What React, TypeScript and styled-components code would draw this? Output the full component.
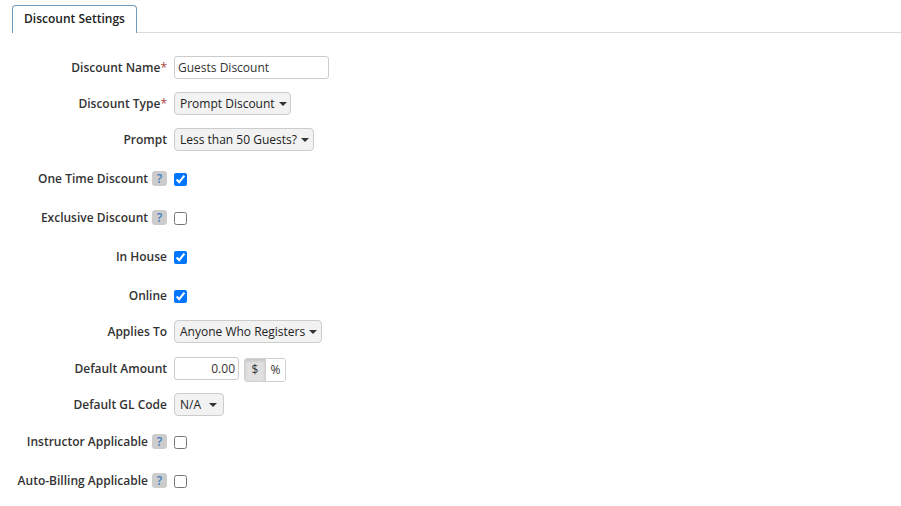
import React from "react";
import styled, { createGlobalStyle } from "styled-components";

const Global = createGlobalStyle`
  body { margin: 0; background: #fff; font-family: "Open Sans", "Noto Sans", sans-serif; color: #333; }
  * { box-sizing: border-box; }
`;

const Page = styled.div`
  width: 901px;
  padding-top: 5px;
`;

const TabBar = styled.div`
  display: flex;
  align-items: flex-end;
  height: 28px;
`;

const TabSpacer = styled.div`
  width: 12px;
`;

const Tab = styled.div`
  width: 125px;
  height: 28px;
  border: 1px solid #6f9cc2;
  border-bottom: none;
  border-radius: 4px 4px 0 0;
  display: flex;
  align-items: center;
  justify-content: center;
  padding-bottom: 2px;
  font-size: 12px;
  font-weight: 600;
  color: #222;
  background: #fff;
`;

const TabLine = styled.div`
  flex: 1;
  border-bottom: 1px solid #dcdcdc;
  height: 28px;
`;

const Form = styled.div`
  display: flex;
  flex-direction: column;
  padding-top: 10px;
`;

const Row = styled.div<{ $gap: number }>`
  display: flex;
  align-items: center;
  height: 23px;
  margin-top: ${(p) => p.$gap}px;
`;

const LabelCell = styled.div`
  width: 167px;
  display: flex;
  justify-content: flex-end;
  align-items: center;
  gap: 4px;
`;

const Label = styled.span`
  font-size: 12px;
  font-weight: 600;
  color: #333;
  white-space: nowrap;
`;

const Req = styled.span`
  color: #a94442;
  font-weight: 400;
`;

const Help = styled.span`
  display: inline-flex;
  align-items: center;
  justify-content: center;
  width: 15px;
  height: 15px;
  border-radius: 3px;
  background: #cccccc;
  color: #3f7fc0;
  font-size: 12px;
  font-weight: 600;
  line-height: 1;
`;

const Control = styled.div`
  margin-left: 7px;
  display: flex;
  align-items: center;
  gap: 5px;
`;

const TextInput = styled.div<{ $w: number; $right?: boolean }>`
  width: ${(p) => p.$w}px;
  height: 23px;
  border: 1px solid #ccc;
  border-radius: 3px;
  background: #fff;
  font-size: 12px;
  color: #333;
  white-space: nowrap;
  display: flex;
  align-items: center;
  justify-content: ${(p) => (p.$right ? "flex-end" : "flex-start")};
  padding: 0 3px 1px 3px;
`;

const Select = styled.div<{ $w: number }>`
  width: ${(p) => p.$w}px;
  height: 23px;
  border: 1px solid #ccc;
  border-radius: 4px;
  background: #f2f2f2;
  font-size: 12px;
  color: #222;
  white-space: nowrap;
  display: flex;
  align-items: center;
  justify-content: space-between;
  gap: 4px;
  padding: 0 6px 1px 5px;
`;

const Caret = styled.span`
  flex: none;
  width: 0;
  height: 0;
  border-left: 4px solid transparent;
  border-right: 4px solid transparent;
  border-top: 4px solid #333;
  margin-top: 1px;
`;

const Check = styled.input.attrs({ type: "checkbox" })`
  width: 13px;
  height: 13px;
  margin: 2px 0 0 0;
`;

const BtnGroup = styled.div`
  display: flex;
  height: 24px;
  margin-top: 2px;
  border: 1px solid #d0d0d0;
  border-radius: 3px;
  overflow: hidden;
`;

const ToggleBtn = styled.div<{ $active?: boolean }>`
  width: 20px;
  display: flex;
  align-items: center;
  justify-content: center;
  font-size: 12px;
  color: #333;
  background: ${(p) => (p.$active ? "#e0e0e0" : "#fff")};
  box-shadow: ${(p) => (p.$active ? "inset 0 2px 3px rgba(0,0,0,0.12)" : "none")};
  & + & {
    border-left: 1px solid #d0d0d0;
  }
`;

type FieldProps = { label: string; req?: boolean; help?: boolean; gap: number; children: React.ReactNode };

const Field = ({ label, req, help, gap, children }: FieldProps) => (
  <Row $gap={gap}>
    <LabelCell>
      <Label>
        {label}
        {req && <Req>*</Req>}
      </Label>
      {help && <Help>?</Help>}
    </LabelCell>
    <Control>{children}</Control>
  </Row>
);

export default function App() {
  return (
    <Page>
      <Global />
      <TabBar>
        <TabSpacer />
        <Tab>Discount Settings</Tab>
        <TabLine />
      </TabBar>
      <Form>
        <Field label="Discount Name" req gap={13}>
          <TextInput $w={155}>Guests Discount</TextInput>
        </Field>
        <Field label="Discount Type" req gap={13}>
          <Select $w={117}>
            Prompt Discount <Caret />
          </Select>
        </Field>
        <Field label="Prompt" gap={13}>
          <Select $w={140}>
            Less than 50 Guests? <Caret />
          </Select>
        </Field>
        <Field label="One Time Discount" help gap={16}>
          <Check defaultChecked />
        </Field>
        <Field label="Exclusive Discount" help gap={16}>
          <Check />
        </Field>
        <Field label="In House" gap={16}>
          <Check defaultChecked />
        </Field>
        <Field label="Online" gap={16}>
          <Check defaultChecked />
        </Field>
        <Field label="Applies To" gap={13}>
          <Select $w={148}>
            Anyone Who Registers <Caret />
          </Select>
        </Field>
        <Field label="Default Amount" gap={14}>
          <TextInput $w={65} $right>0.00</TextInput>
          <BtnGroup>
            <ToggleBtn $active>$</ToggleBtn>
            <ToggleBtn>%</ToggleBtn>
          </BtnGroup>
        </Field>
        <Field label="Default GL Code" gap={13}>
          <Select $w={50}>
            N/A <Caret />
          </Select>
        </Field>
        <Field label="Instructor Applicable" help gap={14}>
          <Check />
        </Field>
        <Field label="Auto-Billing Applicable" help gap={16}>
          <Check />
        </Field>
      </Form>
    </Page>
  );
}
